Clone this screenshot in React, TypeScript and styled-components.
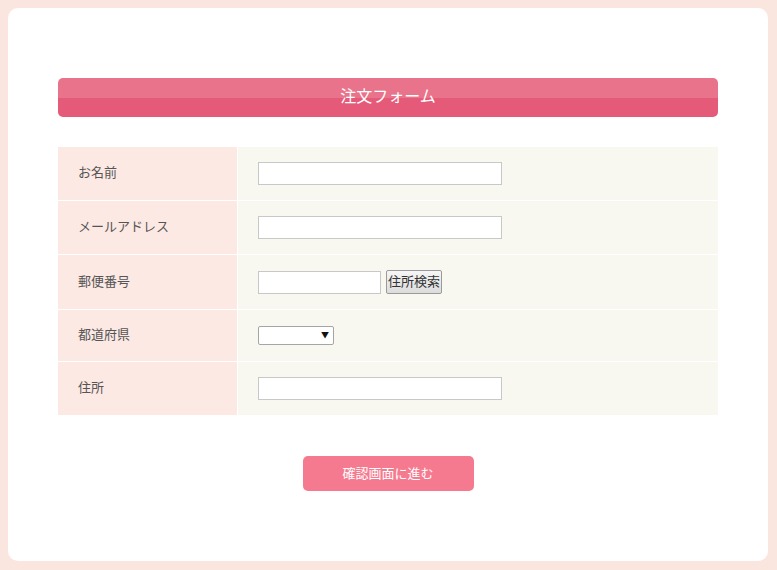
import React from "react";
import styled, { createGlobalStyle } from "styled-components";

const GlobalStyle = createGlobalStyle`
  html, body { margin: 0; padding: 0; }
  body {
    background: #fbe6df;
    padding: 8px 9px 9px 8px;
    font-family: "Noto Sans CJK JP", "Noto Sans", sans-serif;
    color: #555;
  }
`;

const Card = styled.div`
  background: #ffffff;
  border-radius: 10px;
  padding: 70px 50px;
  box-sizing: border-box;
  height: 553px;
`;

const Header = styled.h1`
  margin: 0;
  height: 39px;
  box-sizing: border-box;
  padding-bottom: 4px;
  border-radius: 5px;
  background: linear-gradient(to bottom, #e8738a 0, #e8738a 20px, #e45a78 20px, #e45a78 100%);
  color: #fff;
  font-size: 16px;
  font-weight: normal;
  line-height: 35px;
  text-align: center;
`;

const Table = styled.table`
  margin-top: 30px;
  width: 660px;
  border-collapse: separate;
  border-spacing: 0;
`;

const Row = styled.tr<{ $last?: boolean }>`
  & > td {
    border-bottom: ${(p) => (p.$last ? "none" : "1px solid #fff")};
  }
`;

const Label = styled.td`
  width: 180px;
  box-sizing: border-box;
  background: #fde9e4;
  border-right: 1px solid #fff;
  padding: 13px 20px 17px;
  font-size: 13px;
  line-height: 21px;
  color: #555;
  vertical-align: middle;
`;

const Value = styled.td`
  background: #f9f8f0;
  padding: 15px 20px;
  vertical-align: middle;
  line-height: 0;
`;

const Field = styled.div`
  display: flex;
  align-items: center;
  gap: 5px;
`;

const TextInput = styled.input<{ $w: number }>`
  box-sizing: border-box;
  width: ${(p) => p.$w}px;
  height: 23px;
  border: 1px solid #c8c8c8;
  background: #fff;
  margin: 0;
  padding: 0 4px;
  font-size: 13px;
  outline: none;
`;

const SearchButton = styled.button`
  box-sizing: border-box;
  width: 56px;
  height: 24px;
  margin: 0;
  padding: 0 0 2px;
  border: 1px solid #9a9a9a;
  border-radius: 2px;
  background: linear-gradient(to bottom, #f6f6f6, #dcdcdc);
  color: #333;
  font-family: "Noto Sans CJK JP", sans-serif;
  font-size: 13px;
  line-height: 20px;
`;

const SelectWrap = styled.span`
  position: relative;
  display: inline-block;
  width: 76px;
  height: 19px;
  &::after {
    content: "▼";
    position: absolute;
    right: 5px;
    top: 4px;
    font-size: 8px;
    line-height: 10px;
    color: #111;
    pointer-events: none;
  }
`;

const Select = styled.select`
  appearance: none;
  box-sizing: border-box;
  width: 76px;
  height: 19px;
  margin: 0;
  border: 1px solid #a5a5a5;
  border-radius: 2px;
  background: #fff;
  font-size: 12px;
  outline: none;
`;

const Actions = styled.div`
  display: flex;
  justify-content: center;
  margin-top: 41px;
`;

const SubmitButton = styled.button`
  box-sizing: border-box;
  width: 171px;
  height: 35px;
  border: none;
  border-radius: 5px;
  background: #f67a8f;
  color: #fff;
  font-family: "Noto Sans CJK JP", sans-serif;
  font-size: 13px;
  padding: 0 0 3px;
`;

export default function App() {
  return (
    <>
      <GlobalStyle />
      <Card>
        <Header>注文フォーム</Header>
        <Table>
          <tbody>
            <Row>
              <Label>お名前</Label>
              <Value>
                <TextInput $w={244} type="text" />
              </Value>
            </Row>
            <Row>
              <Label>メールアドレス</Label>
              <Value>
                <TextInput $w={244} type="text" />
              </Value>
            </Row>
            <Row>
              <Label>郵便番号</Label>
              <Value>
                <Field>
                  <TextInput $w={123} type="text" />
                  <SearchButton type="button">住所検索</SearchButton>
                </Field>
              </Value>
            </Row>
            <Row>
              <Label>都道府県</Label>
              <Value>
                <SelectWrap>
                  <Select defaultValue="">
                    <option value=""></option>
                  </Select>
                </SelectWrap>
              </Value>
            </Row>
            <Row $last>
              <Label>住所</Label>
              <Value>
                <TextInput $w={244} type="text" />
              </Value>
            </Row>
          </tbody>
        </Table>
        <Actions>
          <SubmitButton type="button">確認画面に進む</SubmitButton>
        </Actions>
      </Card>
    </>
  );
}
